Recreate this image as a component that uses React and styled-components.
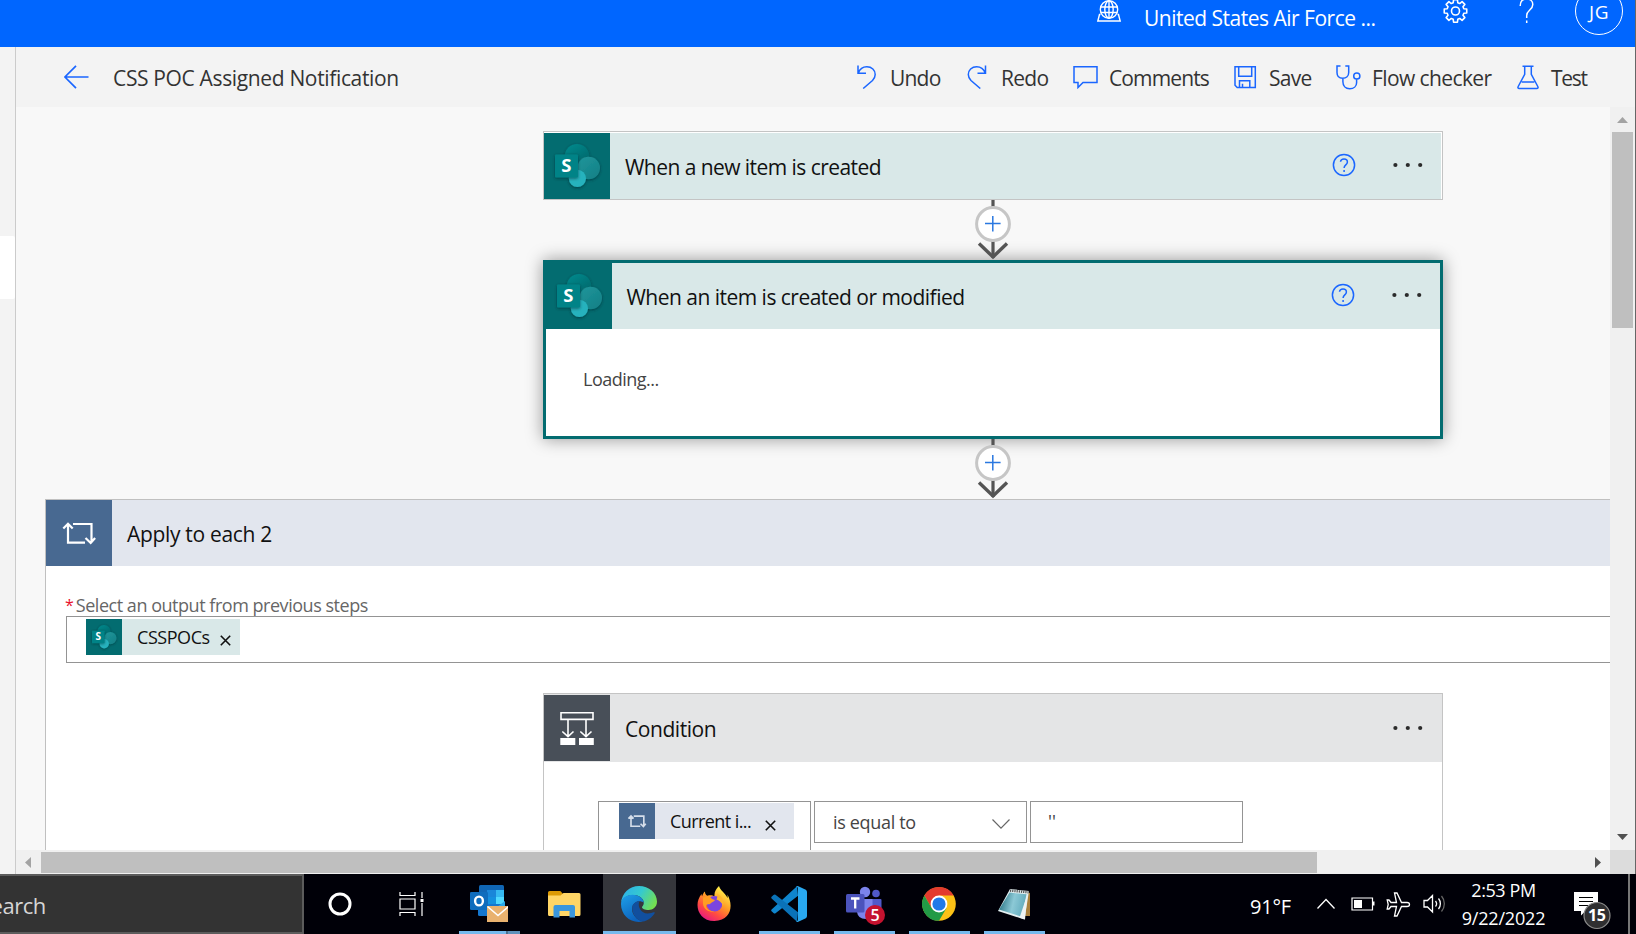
import React from "react";
import styled, { createGlobalStyle, css } from "styled-components";

const GlobalStyle = createGlobalStyle`
  * { box-sizing: border-box; }
  html, body { margin: 0; padding: 0; overflow: hidden; }
  body { font-family: "Open Sans", "Noto Sans", sans-serif; color: #333; background: #f8f8f8; }
  svg { display: block; flex: none; }
`;

const Screen = styled.div`
  width: 1636px;
  height: 934px;
  display: grid;
  grid-template-rows: 874px 60px;
  overflow: hidden;
`;

const BrowserWindow = styled.div`
  display: grid;
  grid-template-rows: 47px 827px;
  border-right: 1px solid #666;
  overflow: hidden;
`;

const Label = styled.span`
  display: block;
  flex: none;
  font-size: ${(p) => p.$size || 21}px;
  line-height: 24px;
  letter-spacing: ${(p) => p.$track || 0}px;
  color: ${(p) => p.$color || "#333"};
  white-space: pre;
`;

/* ---------- header ---------- */

const Header = styled.header`
  background: #0066ff;
  display: flex;
  align-items: flex-start;
  padding-left: 1096px;
  overflow: hidden;
`;

const Environment = styled.div`
  display: flex;
  width: 347px;
  gap: 22px;
  ${Label} { margin-top: 6px; }
`;

const HeaderIcon = styled.div`
  width: ${(p) => p.$width}px;
`;

const Avatar = styled.div`
  width: 48px;
  height: 48px;
  margin-top: -13px;
  border: 1px solid #fff;
  border-radius: 50%;
  display: flex;
  align-items: center;
  justify-content: center;
  padding-top: 2px;
`;

/* ---------- toolbar ---------- */

const Workspace = styled.div`
  display: grid;
  grid-template-columns: 16px 1619px;
`;

const Rail = styled.aside`
  background: #f3f3f3;
  border-right: 1px solid #cbcbcb;
  padding-top: 189px;
`;

const RailItem = styled.div`
  height: 63px;
  background: #fff;
  border-radius: 0 2px 2px 0;
`;

const Main = styled.main`
  display: grid;
  grid-template-rows: 60px 767px;
  min-width: 0;
`;

const Toolbar = styled.div`
  background: #f3f3f3;
  display: flex;
  align-items: center;
  padding-left: 48px;
`;

const TitleGroup = styled.div`
  display: flex;
  align-items: center;
  width: 792px;
  gap: 24px;
  ${Label} { padding-top: 2px; line-height: 26px; }
`;

const Command = styled.button`
  border: 0;
  padding: 0;
  margin: 0;
  background: none;
  font-family: inherit;
  display: flex;
  align-items: center;
  width: ${(p) => p.$width}px;
  gap: ${(p) => p.$gap}px;
  ${Label} { padding-top: 2px; line-height: 26px; }
`;

/* ---------- canvas ---------- */

const Scroller = styled.div`
  display: grid;
  grid-template-columns: 1594px 25px;
  grid-template-rows: 743px 24px;
`;

const Canvas = styled.section`
  background: #f8f8f8;
  overflow: hidden;
  padding-top: 24px;
`;

const Card = styled.article`
  width: 900px;
  margin-left: 527px;
  background: #fff;
  border: 1px solid #c4c4c4;
  ${(p) => p.$kind === "trigger" && css`height: 69px; padding: 1px 1px 0 0;`}
  ${(p) => p.$kind === "selected" && css`
    height: 179px;
    border: 3px solid #036c70;
    box-shadow: 0 0 16px rgba(0, 0, 0, 0.4);
  `}
  ${(p) => p.$kind === "condition" && css`
    height: 300px;
    margin-left: 497px;
    margin-top: 30px;
  `}
`;

const CardHeader = styled.div`
  height: ${(p) => p.$height || 66}px;
  background: ${(p) => p.$bg};
  display: flex;
  align-items: ${(p) => (p.$height ? "flex-start" : "center")};
  ${Label} {
    flex: 1;
    padding: 2px 0 0 ${(p) => p.$inset || 15}px;
    line-height: 26px;
    ${(p) => p.$height && css`padding-top: 22px;`}
  }
`;

const Tile = styled.div`
  width: ${(p) => p.$size || 66}px;
  height: ${(p) => p.$size || 66}px;
  flex: none;
  background: ${(p) => p.$bg};
  display: flex;
  align-items: center;
  justify-content: center;
  ${(p) => p.$drop && css`margin-top: ${p.$drop}px;`}
`;

const CardActions = styled.div`
  display: flex;
  align-items: center;
  gap: 37px;
  padding-right: ${(p) => p.$right}px;
  padding-bottom: 2px;
  ${(p) => p.$top && css`padding-top: ${p.$top}px;`}
`;

const CardBody = styled.div`
  padding: 38px 0 0 37px;
`;

const Connector = styled.div`
  height: 60px;
  margin-left: 958px;
  position: relative;
`;

const Scope = styled.article`
  margin-left: 29px;
  height: 600px;
  background: #fff;
  border: solid #c0c0c0;
  border-width: 1px 0 0 1px;
`;

const FieldLabel = styled.div`
  display: flex;
  padding: 28px 0 0 19px;
  gap: 2px;
  ${Label} { line-height: 22px; }
`;

const OutputInput = styled.div`
  height: 47px;
  margin-left: 20px;
  border: 1px solid #949494;
  border-right: 0;
  padding: 2px 0 0 19px;
`;

const Token = styled.div`
  display: flex;
  align-items: center;
  width: ${(p) => p.$width}px;
  height: 36px;
  background: ${(p) => p.$bg};
  ${Label} { width: ${(p) => p.$textWidth}px; margin-left: 15px; }
  > svg { margin-top: ${(p) => p.$closeTop || 6}px; }
`;

const ConditionRow = styled.div`
  display: flex;
  gap: 3px;
  padding: 39px 0 0 54px;
`;

const ConditionField = styled.div`
  width: 213px;
  height: ${(p) => p.$height || 42}px;
  border: 1px solid #949494;
  display: flex;
  justify-content: space-between;
  align-items: flex-start;
  padding: ${(p) => p.$pad};
`;

/* ---------- scroll bars ---------- */

const VBar = styled.div`
  background: #f0f0f0;
  display: flex;
  flex-direction: column;
  align-items: center;
  justify-content: space-between;
  padding: 10px 0 10px;
`;

const VThumb = styled.div`
  width: 21px;
  height: 196px;
  background: #bfbfbf;
  margin: 9px 0 auto;
`;

const HBar = styled.div`
  background: #f0f0f0;
  display: flex;
  align-items: center;
  padding: 0 9px;
`;

const HThumb = styled.div`
  width: 1276px;
  height: 21px;
  background: #bfbfbf;
  margin: 1px auto 0 10px;
`;

const Corner = styled.div`
  background: #dcdcdc;
`;

/* ---------- task bar ---------- */

const Taskbar = styled.footer`
  background: #000008;
  display: flex;
`;

const SearchBox = styled.div`
  width: 304px;
  height: 60px;
  background: #333;
  border: 2px solid #5c5c5c;
  border-left: 0;
  display: flex;
  align-items: center;
  overflow: hidden;
  ${Label} { margin-left: -21px; padding-top: 1px; }
`;

const SystemButton = styled.div`
  width: 72px;
  display: flex;
  align-items: center;
  justify-content: center;
`;

const Apps = styled.div`
  display: flex;
  padding-left: 4px;
  width: 798px;
`;

const AppSlot = styled.div`
  width: 75px;
  height: 60px;
  display: flex;
  align-items: center;
  justify-content: center;
  position: relative;
`;

const AppFace = styled.div`
  width: ${(p) => (p.$active ? 73 : 61)}px;
  height: 60px;
  display: flex;
  align-items: center;
  justify-content: center;
  background: ${(p) => (p.$active ? "#35363c" : "transparent")};
  border-bottom: 3px solid ${(p) => (p.$open ? "#76b9ed" : "transparent")};
  padding: 3px 1px 0 0;
`;

const Grouped = styled.div`
  position: absolute;
  right: 7px;
  bottom: 0;
  width: 14px;
  height: 3px;
  background: #5f91bb;
  border-left: 2px solid #4a6f8e;
`;

const Badge = styled.div`
  position: absolute;
  left: 38px;
  top: 31px;
  width: 20px;
  height: 20px;
  border-radius: 50%;
  background: #c4122f;
  display: flex;
  align-items: center;
  justify-content: center;
  ${Label} { font-weight: 600; line-height: 18px; }
`;

const Tray = styled.div`
  display: flex;
  align-items: center;
  flex: 1;
  padding-left: 4px;
`;

const Temperature = styled.div`
  width: 67px;
  padding-top: 5px;
`;

const TrayIcons = styled.div`
  display: flex;
  align-items: center;
  width: 145px;
  gap: 11.5px;
  > :first-child { margin-right: 4px; }
`;

const Clock = styled.div`
  width: 112px;
  display: flex;
  flex-direction: column;
  align-items: center;
  gap: 4px;
  padding-right: 29px;
`;

const Notifications = styled.div`
  padding-top: 14px;
`;

const ShowDesktop = styled.div`
  width: 2px;
  height: 60px;
  margin-left: auto;
  margin-right: 6px;
  background: #777;
`;

/* ---------- drawings ---------- */

const Stroke = ({ w, h, color = "#1a66ff", sw = 1.5, children, ...rest }) => (
  <svg width={w} height={h} viewBox={`0 0 ${w} ${h}`} fill="none" stroke={color} strokeWidth={sw} {...rest}>
    {children}
  </svg>
);

const SharePoint = ({ size = 66, id }) => (
  <svg width={size} height={size} viewBox="0 0 66 66">
    <defs>
      <linearGradient id={id + "a"} x1="0" y1="0" x2="0.6" y2="1">
        <stop offset="0" stopColor="#068c8f" />
        <stop offset="1" stopColor="#056468" />
      </linearGradient>
      <linearGradient id={id + "b"} x1="0" y1="0" x2="0.8" y2="1">
        <stop offset="0" stopColor="#1f969b" />
        <stop offset="1" stopColor="#148187" />
      </linearGradient>
      <filter id={id + "s"} x="-30%" y="-30%" width="160%" height="160%">
        <feDropShadow dx="0" dy="1" stdDeviation="1.8" floodColor="#002b2d" floodOpacity="0.65" />
      </filter>
    </defs>
    <g filter={`url(#${id}s)`}>
      <circle cx="33" cy="23.3" r="12.3" fill={`url(#${id}a)`} />
      <circle cx="44.7" cy="35" r="11.3" fill={`url(#${id}b)`} />
      <circle cx="33.4" cy="45.3" r="8.6" fill="#26b2bd" />
    </g>
    <rect x="11" y="21.5" width="23" height="23" rx="1" fill="#038387" filter={`url(#${id}s)`} />
    <text x="22.4" y="39.4" textAnchor="middle" fontSize="18.5" fontWeight="700" fill="#fff" fontFamily="Open Sans, sans-serif">S</text>
  </svg>
);

const Loop = ({ size = 66, sw = 2.2, color = "#fff" }) => (
  <svg width={size} height={size} viewBox="0 0 66 66" fill="none" stroke={color} strokeWidth={sw}>
    <path d="M22 24v18.7h17M17.3 28.6 22 23.8l4.7 4.8M27 24h18.5v18M39.5 38l5.2 5 4.4-5" />
  </svg>
);

const Branch = () => (
  <svg width="66" height="66" viewBox="0 0 66 66" fill="none" stroke="#fff" strokeWidth="1.6">
    <path d="M17 17.8h32v6.6H17zM24 24.5v17M42 24.5v17M18.3 36.5l5.7 5.2 5.5-5.2M36.3 36.5l5.7 5.2 5.5-5.2" />
    <path d="M16.3 43h15v7h-15zM35 43h14.8v7H35z" fill="#fff" stroke="none" />
  </svg>
);

const Help = () => (
  <Stroke w={24} h={24}>
    <circle cx="12" cy="12" r="10.6" />
    <path d="M8.5 8.8c.2-2 1.6-2.9 3.5-2.9s3.4 1.2 3.4 3c0 2.9-3.3 3-3.3 6M12.1 17v2" />
  </Stroke>
);

const More = () => (
  <svg width="30" height="6" viewBox="0 0 30 6" fill="#2b2b2b">
    <circle cx="2.4" cy="3" r="2.1" />
    <circle cx="14.8" cy="3" r="2.1" />
    <circle cx="27.2" cy="3" r="2.1" />
  </svg>
);

const AddStep = () => (
  <Connector>
    <svg width="38" height="60" viewBox="0 0 38 60" fill="none">
      <path d="M19 0v58" stroke="#555" strokeWidth="3.2" />
      <path d="M5 43.5 19 57l14-13.5" stroke="#555" strokeWidth="3.4" />
      <circle cx="19" cy="24" r="16.4" fill="#fff" stroke="#c6c6c6" strokeWidth="3" />
      <path d="M11 23.6h15.6M18.8 16v15.4" stroke="#2a78e0" strokeWidth="1.5" />
    </svg>
  </Connector>
);

const Close = () => (
  <Stroke w={11} h={11} color="#111" sw={1.6}><path d="m.8.8 9.4 9.4M10.2.8.8 10.2" /></Stroke>
);

const Arrow = ({ d, w, h, fill }) => (
  <svg width={w} height={h} viewBox={`0 0 ${w} ${h}`} fill={fill}><path d={d} /></svg>
);

const Outlook = () => (
  <svg width="38" height="38" viewBox="0 0 38 38">
    <path d="M9 1.5Q9 0 10.5 0h22Q34 0 34 1.5V23H9z" fill="#1066b5" />
    <path d="M17 5h9v7h-9z" fill="#1a86d9" />
    <path d="M26 5h8v7h-8z" fill="#35b8f1" />
    <path d="M17 12h9v7h-9z" fill="#1490df" />
    <path d="M26 12h8v7h-8z" fill="#50d9ff" />
    <path d="M8 19h27v12H9.5Q8 31 8 29.5z" fill="#1477cf" />
    <path d="M35 16v8l-12 1z" fill="#28a8ea" />
    <rect y="7" width="18" height="18" rx="1.3" fill="#0f6cbd" />
    <ellipse cx="9" cy="16" rx="3.9" ry="4.4" fill="none" stroke="#fff" strokeWidth="2.4" />
    <rect x="17" y="21" width="22" height="16" fill="#e9b26f" />
    <path d="m17.5 21.5 10.5 9 10.5-9" fill="none" stroke="#fff" strokeWidth="1.6" />
  </svg>
);

const Folder = () => (
  <svg width="33" height="27" viewBox="0 0 33 27">
    <path d="M0 1.5Q0 0 1.5 0H12q1 0 1.7 1.5L15 3v6H0z" fill="#dc9a05" />
    <path d="M0 4.5h12.5L15.5 2H31q1.5 0 1.5 1.5v20Q32.500 25 31 25H1.500Q0 25 0 23.500z" fill="#ffd566" />
    <path d="M5.5 26.5V16q0-2 2-2h17.5q2 0 2 2v10.5h-5.5V20h-10v6.5z" fill="#3a96dd" />
  </svg>
);

const Edge = () => (
  <svg width="36" height="36" viewBox="0 0 36 36">
    <defs>
      <linearGradient id="edgeTop" x1="0" y1="0.2" x2="1" y2="0.6">
        <stop offset="0" stopColor="#2cb0ea" />
        <stop offset="0.5" stopColor="#35c9cf" />
        <stop offset="1" stopColor="#74e050" />
      </linearGradient>
      <linearGradient id="edgeMid" x1="0" y1="0" x2="0.5" y2="1">
        <stop offset="0" stopColor="#1ea0e8" />
        <stop offset="1" stopColor="#0c62bd" />
      </linearGradient>
    </defs>
    <path d="M0 17C.8 7 8.5 0 18 0c10 0 18 7 18 15.5 0 5.5-4 8.5-8.5 8.5-3.5 0-6.5-1.2-6.5-2.8 0-1 1.8-1.7 1.8-4.2C22.8 12.5 18 9 12 9 6 9 1.5 12.5 0 17z" fill="url(#edgeTop)" />
    <path d="M0 18C0 12.5 5 8.8 11.5 8.8c6.5 0 11 3.8 11.3 8-3-2.8-10-1.8-11.5 4.2C10 27.5 15 34 22 35.5 10 38 0 29.5 0 18z" fill="url(#edgeMid)" />
    <path d="M11.2 21.5C11.5 18 14.5 15.5 18.5 15c-2.5 5.5 1.5 12.5 8 12.5 3 0 5-.8 6.2-1.2C33.8 26 34 26.8 33.5 27.5 31 31.5 26.5 35 22 35.5 15.5 34.5 11 28 11.2 21.5z" fill="#114f9e" />
  </svg>
);

const Firefox = () => (
  <svg width="35" height="36" viewBox="0 0 35 36">
    <defs>
      <linearGradient id="fox" x1="0.8" y1="0.1" x2="0.25" y2="1">
        <stop offset="0" stopColor="#fff04a" />
        <stop offset="0.4" stopColor="#ff9a26" />
        <stop offset="0.7" stopColor="#ff4a41" />
        <stop offset="1" stopColor="#e31587" />
      </linearGradient>
    </defs>
    <path d="M22 0c1 4.5 6.5 7 8.5 12 .3-1.3 0-2.5-.2-3.5 6 9.5 5 26-13 26.5C6 35 .5 27 .5 19c0-4 1.5-8 4-11l.5 2.5C6 8 6.5 6.5 8 5.5c-.2 2 1 3.5 2.5 4.2 2.5-.8 5.5-.4 7 .8C17 6.5 19 2.5 22 0z" fill="url(#fox)" />
    <circle cx="17.5" cy="17.8" r="7.8" fill="#7b45df" />
    <path d="M6 11.5c3-1.5 7-1.5 9 1.5l3 1c-.6 1.8-3 1.6-4.5 3.5-1.5 1.5-3.5 0-4.5 2 0 3 4 6 8.5 6-6 1.5-11.5-3-11.5-8z" fill="#ff9d23" />
    <path d="M20 7.5c5.5 3 7.5 8 6 12.5-.8-3-3.5-5.5-6.5-6.5 1-2 1.2-4 .5-6z" fill="#ffb52d" />
  </svg>
);

const VsCode = () => (
  <svg width="36" height="36" viewBox="0 0 36 36">
    <path d="m26 .3 1 9.5L4.5 27.3Q3.500 28 2.500 27L.6 25.2Q-.2 24.4.6 23.6z" fill="#0f85ce" />
    <path d="m26 35.7 1-9.5L4.5 8.7Q3.500 8 2.500 9L.6 10.8Q-.2 11.6.6 12.4z" fill="#0a72b8" />
    <path d="M25 .7Q26-.3 27.3.3l7.5 3.5Q36 4.500 36 6v24q0 1.5-1.2 2.2l-7.5 3.5Q26 36.300 25 35.300q2 .3 2-2V2.7q0-2.3-2-2z" fill="#29a8f0" />
  </svg>
);

const Teams = () => (
  <svg width="38" height="36" viewBox="0 0 38 36">
    <circle cx="20" cy="6" r="5.2" fill="#7b83eb" />
    <circle cx="31" cy="7.5" r="3.8" fill="#5059c9" />
    <path d="M25 13h10.5q1 0 1 1v9q0 5-5.5 5h-6z" fill="#5059c9" />
    <path d="M12 13h15.5v13q0 7-7 7-7.5 0-8.5-7z" fill="#7b83eb" />
    <rect x="1" y="8" width="18.5" height="18.5" rx="1.5" fill="#4b53bc" />
    <path d="M6 12.5h8.5M10.2 12.5v10" stroke="#fff" strokeWidth="2.3" />
  </svg>
);

const Chrome = () => (
  <svg width="34" height="34" viewBox="0 0 34 34">
    <circle cx="17" cy="17" r="16.8" fill="#fbc116" />
    <path d="M2.4 8.5A16.8 16.8 0 0 1 31.6 8.5H17l-7.3 12.8z" fill="#e33b2e" />
    <path d="M2.4 8.5A16.8 16.8 0 0 0 17 33.8l7.4-12.6H9.7z" fill="#229a46" />
    <circle cx="17" cy="17" r="8.4" fill="#fff" />
    <circle cx="17" cy="17" r="6.6" fill="#2079e8" />
  </svg>
);

const Notepad = () => (
  <svg width="33" height="33" viewBox="0 0 33 33">
    <defs>
      <linearGradient id="pad" x1="0" y1="0.4" x2="1" y2="0.6">
        <stop offset="0" stopColor="#2b7685" />
        <stop offset="0.5" stopColor="#8cc9d6" />
        <stop offset="1" stopColor="#5ea9bb" />
      </linearGradient>
    </defs>
    <path d="m29 4 3 1v23h-5z" fill="#a9803c" />
    <path d="m12 1 19 2-4.5 28.5L0 23z" fill="#e3eff1" />
    <path d="m11.5 4.5 17 1.8-4.5 22.5L1 21.5z" fill="url(#pad)" />
    <path d="m12 2.6 18.5 1.7" stroke="#555" strokeWidth="2.4" strokeDasharray="1.2 1" />
    <path d="M29.5 6 27 31.5l-5.5-1.8z" fill="#eef3f3" />
  </svg>
);

const NotificationIcon = () => (
  <svg width="38" height="38" viewBox="0 0 38 38">
    <path d="M0 0h24v19H11.5L7 23.5V19H0z" fill="#fff" />
    <path d="M5 5.5h14M5 9.5h14M5 13.5h9" stroke="#000" strokeWidth="1.2" />
    <circle cx="23" cy="23.5" r="13" fill="#2f2f31" stroke="#8a8a8a" strokeWidth="1.2" />
    <text x="22.7" y="29.4" textAnchor="middle" fontSize="16" fontWeight="700" letterSpacing="-0.5" fill="#fff" fontFamily="Open Sans, sans-serif">15</text>
  </svg>
);

const gearPath = (() => {
  const pts = [];
  for (let i = 0; i < 8; i++) {
    [[-0.27, 8.6], [-0.17, 11.4], [0.17, 11.4], [0.27, 8.6]].forEach(([o, r]) => {
      const a = (i * Math.PI) / 4 + o;
      pts.push(`${(12.5 + r * Math.sin(a)).toFixed(2)} ${(12.5 - r * Math.cos(a)).toFixed(2)}`);
    });
  }
  return "M" + pts.join("L") + "Z";
})();

/* ---------- page ---------- */

const TopHeader = () => (
  <Header>
    <Environment>
      <Stroke w={26} h={23} color="#fff" sw={1.4}>
        <circle cx="13" cy="9.5" r="8.7" />
        <ellipse cx="13" cy="9.5" rx="4.2" ry="8.7" />
        <path d="M4.6 7h16.8M4.6 12.5h16.8M13 .8v17.4M4.5 14.5H3.5L1.8 21h22.4l-1.7-6.5h-1" />
      </Stroke>
      <Label $track={-0.5} $color="#fff">United States Air Force ...</Label>
    </Environment>
    <HeaderIcon $width={76}>
      <Stroke w={26} h={25} color="#fff" sw={1.6} viewBox="0 1.5 26 25">
        <path d={gearPath} strokeLinejoin="round" />
        <circle cx="12.5" cy="12.5" r="4" />
      </Stroke>
    </HeaderIcon>
    <HeaderIcon $width={56}>
      <Stroke w={16} h={25} color="#fff" sw={1.5}>
        <path d="M1.2 6C1.2 1.5 3.5-1 7.5-1s6.3 2.5 6.3 5.5C13.8 10 7.7 10 7.7 15.5v2.5M7.7 20.5V23" />
      </Stroke>
    </HeaderIcon>
    <Avatar><Label $size={19} $color="#fff" $track={0.6}>JG</Label></Avatar>
  </Header>
);

const commands = [
  { text: "Undo", width: 111, gap: 13, track: -0.8, icon: (
    <Stroke w={21} h={24}><path d="M2 .5v7.8h8M2.3 8C3.8 4 7 1.8 10.8 1.8c5 0 8.4 3.5 8.4 7.7 0 2.5-1 4.2-2.7 6L7.2 23.5" /></Stroke>) },
  { text: "Redo", width: 106, gap: 13, track: -0.7, icon: (
    <Stroke w={21} h={24}><path d="M18.5.5v7.8h-8M18.2 8C16.7 4 13.5 1.8 9.7 1.8 4.7 1.8 1.3 5.3 1.3 9.5c0 2.5 1 4.2 2.7 6l9.3 8" /></Stroke>) },
  { text: "Comments", width: 161, gap: 11, track: -0.87, icon: (
    <Stroke w={25} h={24}><path d="M1 1.8h23v15.7H10l-5 5v-5H1z" /></Stroke>) },
  { text: "Save", width: 102, gap: 12, track: -0.75, icon: (
    <Stroke w={23} h={24}><path d="M1 1.8h20.3v20.7H3.2L1 20.2zM4.7 1.8v9.5h13V1.8M5.5 22.5v-6.8h10.3v6.8M8.5 22.5v-3.7" /></Stroke>) },
  { text: "Flow checker", width: 181, gap: 11, track: -0.6, icon: (
    <Stroke w={25} h={25}><path d="M4.5 1H1v6.5c0 3.5 2.2 5.7 5.7 5.7s6-2.2 6-5.7V1H9.3M6.9 13.2v3.5c0 4 2.6 7 6.8 7s6.9-2.5 6.9-6v-3.5" /><circle cx="20.8" cy="11" r="3.1" /></Stroke>) },
  { text: "Test", width: 80, gap: 12, track: -1.3, icon: (
    <Stroke w={22} h={25}><path d="M5.5 1.3h11M7.7 1.3v8L1.2 21.5c-.6 1.2-.2 2 1 2h17.6c1.2 0 1.6-.8 1-2l-6.5-12.2v-8M4.7 17h12.6" /></Stroke>) },
];

const apps = [
  { Icon: Outlook, open: true, grouped: true },
  { Icon: Folder },
  { Icon: Edge, open: true, active: true },
  { Icon: Firefox },
  { Icon: VsCode, open: true },
  { Icon: Teams, open: true, badge: "5" },
  { Icon: Chrome, open: true },
  { Icon: Notepad, open: true },
];

export default function App() {
  return (
    <Screen>
      <GlobalStyle />
      <BrowserWindow>
        <TopHeader />
        <Workspace>
          <Rail><RailItem /></Rail>
          <Main>
            <Toolbar>
              <TitleGroup>
                <Stroke w={25} h={24} sw={1.7}><path d="M24.5 12H1.5M12 .8.9 12 12 23.2" /></Stroke>
                <Label $track={-0.35}>CSS POC Assigned Notification</Label>
              </TitleGroup>
              {commands.map((c) => (
                <Command key={c.text} $width={c.width} $gap={c.gap}>
                  {c.icon}
                  <Label $track={c.track}>{c.text}</Label>
                </Command>
              ))}
            </Toolbar>
            <Scroller>
              <Canvas>
                <Card $kind="trigger">
                  <CardHeader $bg="#d9e8e8">
                    <Tile $bg="#036c70"><SharePoint id="sp1" /></Tile>
                    <Label $color="#111" $track={-0.55}>When a new item is created</Label>
                    <CardActions $right={18}><Help /><More /></CardActions>
                  </CardHeader>
                </Card>
                <AddStep />
                <Card $kind="selected">
                  <CardHeader $bg="#d9e8e8" $inset={14.5}>
                    <Tile $bg="#036c70"><SharePoint id="sp2" /></Tile>
                    <Label $color="#111" $track={-0.52}>When an item is created or modified</Label>
                    <CardActions $right={18}><Help /><More /></CardActions>
                  </CardHeader>
                  <CardBody><Label $size={18} $color="#444" $track={-0.5}>Loading...</Label></CardBody>
                </Card>
                <AddStep />
                <Scope>
                  <CardHeader $bg="#e2e6ee" $inset={15}>
                    <Tile $bg="#486991"><Loop /></Tile>
                    <Label $color="#111" $track={-0.32}>Apply to each 2</Label>
                  </CardHeader>
                  <FieldLabel>
                    <Label $size={16} $color="#e8112d">*</Label>
                    <Label $size={18} $color="#666" $track={-0.47}>Select an output from previous steps</Label>
                  </FieldLabel>
                  <OutputInput>
                    <Token $width={154} $bg="#d9e8e8" $textWidth={83}>
                      <Tile $size={36} $bg="#036c70"><SharePoint id="sp3" size={36} /></Tile>
                      <Label $size={18} $color="#111" $track={-0.45}>CSSPOCs</Label>
                      <Close />
                    </Token>
                  </OutputInput>
                  <Card $kind="condition">
                    <CardHeader $bg="#e4e5e6" $height={68}>
                      <Tile $bg="#484f58" $drop={1}><Branch /></Tile>
                      <Label $color="#111" $track={-0.45}>Condition</Label>
                      <CardActions $right={19} $top={31}><More /></CardActions>
                    </CardHeader>
                    <ConditionRow>
                      <ConditionField $height={80} $pad="1px 0 0 20px">
                        <Token $width={175} $bg="#e2e6ee" $textWidth={95} $closeTop={9}>
                          <Tile $size={36} $bg="#486991"><Loop size={36} sw={3} color="#d5deea" /></Tile>
                          <Label $size={18} $color="#111" $track={-0.58}>Current i...</Label>
                          <Close />
                        </Token>
                      </ConditionField>
                      <ConditionField $pad="8px 16px 0 18px">
                        <Label $size={18} $color="#444" $track={-0.33}>is equal to</Label>
                        <Stroke w={18} h={28} color="#666" sw={1.2}><path d="m.5 9.5 8.5 8.7 8.5-8.7" /></Stroke>
                      </ConditionField>
                      <ConditionField $pad="7px 0 0 17px">
                        <Label $size={18} $color="#444">''</Label>
                      </ConditionField>
                    </ConditionRow>
                  </Card>
                </Scope>
              </Canvas>
              <VBar>
                <Arrow w={11} h={6} fill="#a3a3a3" d="M0 6 5.5 0 11 6z" />
                <VThumb />
                <Arrow w={11} h={6} fill="#505050" d="M0 0h11L5.5 6z" />
              </VBar>
              <HBar>
                <Arrow w={6} h={11} fill="#a3a3a3" d="M6 0v11L0 5.5z" />
                <HThumb />
                <Arrow w={6} h={11} fill="#505050" d="M0 0v11l6-5.5z" />
              </HBar>
              <Corner />
            </Scroller>
          </Main>
        </Workspace>
      </BrowserWindow>
      <Taskbar>
        <SearchBox><Label $size={22} $color="#d6d6d6" $track={-0.5}>Search</Label></SearchBox>
        <SystemButton>
          <Stroke w={24} h={24} color="#fff" sw={3}><circle cx="12" cy="12" r="10" /></Stroke>
        </SystemButton>
        <SystemButton>
          <Stroke w={26} h={24} color="#fff" sw={1.2}>
            <path d="M1 0v3.5h15V0M1 7h15v10H1zM1 24v-3.5h15V24M23 0v6M23 11v13" />
            <path d="M21.5 7h3v3h-3z" fill="#fff" stroke="none" />
          </Stroke>
        </SystemButton>
        <Apps>
          {apps.map(({ Icon, open, active, grouped, badge }, i) => (
            <AppSlot key={i}>
              <AppFace $open={open} $active={active}><Icon /></AppFace>
              {grouped && <Grouped />}
              {badge && <Badge><Label $size={16} $color="#fff">{badge}</Label></Badge>}
            </AppSlot>
          ))}
        </Apps>
        <Tray>
          <Temperature><Label $size={20} $color="#fff" $track={-0.2}>91°F</Label></Temperature>
          <TrayIcons>
            <Stroke w={18} h={12} color="#fff" sw={1.3}><path d="m.5 10.5 8.5-9 8.5 9" /></Stroke>
            <Stroke w={24} h={14} color="#fff" sw={1.2}>
              <path d="M1 1h20.5v12H1z" /><path d="M3 3h8v8H3zM22 4.5h1.5v4H22z" fill="#fff" stroke="none" />
            </Stroke>
            <Stroke w={25} h={25} color="#fff" sw={1.3}>
              <path d="M23.5 12.5c0-1.3-1.2-2-2.5-2h-5.5L11 1H8.5l2 9.5H5L3 8H1.2l1 4.5-1 4.5H3l2-2.5h5.5l-2 9.5H11l4.5-9.5H21c1.3 0 2.5-.7 2.5-2z" />
            </Stroke>
            <Stroke w={23} h={20} color="#fff" sw={1.3}>
              <path d="M1 6.5h3.5L9.5 1.5v16.5L4.5 13H1zM12.5 7c1.3 1.7 1.3 4 0 5.5M15.5 4.5c2.5 3 2.5 7.5 0 10.5" /><path d="M18.5 2c3.8 4.5 3.8 11 0 15.5" stroke="#666" />
            </Stroke>
          </TrayIcons>
          <Clock>
            <Label $size={18} $color="#fff" $track={-0.42}>2:53 PM</Label>
            <Label $size={18} $color="#fff" $track={-0.2}>9/22/2022</Label>
          </Clock>
          <Notifications><NotificationIcon /></Notifications>
          <ShowDesktop />
        </Tray>
      </Taskbar>
    </Screen>
  );
}
